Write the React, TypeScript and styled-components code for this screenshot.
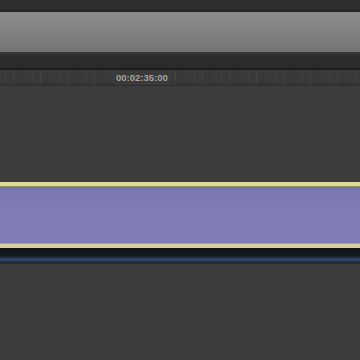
import React from "react";
import styled, { createGlobalStyle } from "styled-components";

const Global = createGlobalStyle`
  html, body { margin: 0; padding: 0; background: #3a3a3a; }
  #root { width: 360px; height: 360px; overflow: hidden; }
`;

const Screen = styled.div`
  position: relative;
  width: 360px;
  height: 360px;
  display: flex;
  flex-direction: column;
  background: #3b3b3b;
  overflow: hidden;
  font-family: "Liberation Sans", Arial, sans-serif;
`;

const TopBar = styled.div`
  height: 9px;
  background: linear-gradient(#2c2c2c, #303030);
  border-bottom: 3px solid #262626;
`;

const ScrollBand = styled.div`
  height: 40px;
  background: linear-gradient(#8c8c8c, #7f7f7f 60%, #737373);
  border-bottom: 2px solid #363636;
`;

const Toolbar = styled.div`
  height: 14px;
  background: linear-gradient(#2f2f2f, #2a2a2a);
  border-bottom: 2px solid #1c1c1c;
`;

const Ruler = styled.div`
  position: relative;
  height: 15px;
  background: repeating-linear-gradient(
      90deg,
      transparent 0 5px,
      rgba(255, 255, 255, 0.035) 5px 6px,
      transparent 6px 13px,
      rgba(255, 255, 255, 0.05) 13px 14px,
      transparent 14px 19px,
      rgba(0, 0, 0, 0.08) 19px 20px,
      transparent 20px 27px
    ),
    linear-gradient(#3b3b3b, #383838 70%, #343434);
  border-bottom: 1px solid #2c2c2c;
  display: flex;
  align-items: center;
`;

const Timecode = styled.span`
  margin-left: 115px;
  padding: 0 3px 0 1px;
  font-size: 9.5px;
  font-weight: bold;
  color: #a4a4a4;
  background: #3a3a3a;
  line-height: 15px;
`;

const Tracks = styled.div`
  position: relative;
  flex: 1;
  display: flex;
  flex-direction: column;
  background: #3c3c3c;
`;

const Playhead = styled.div`
  position: absolute;
  left: 110px;
  top: 0;
  bottom: 0;
  width: 1px;
  background: repeating-linear-gradient(
    #444444 0 2px,
    transparent 2px 4px
  );
`;

const Gap = styled.div<{ $h: number }>`
  height: ${(p) => p.$h}px;
  flex: none;
`;

const Clip = styled.div`
  position: relative;
  height: 58px;
  flex: none;
  background: linear-gradient(#7471a8 0, #7b78b0 6px, #807db5 40%, #7f7cb4 100%);
  border-top: 4px solid #dcd897;
  border-bottom: 4px solid #d4d1a0;
  box-shadow: inset 0 1px 0 #8f8c6c, inset 0 -1px 0 #a29db0;
`;

const Under = styled.div`
  position: relative;
  height: 16px;
  flex: none;
  background: linear-gradient(
    #111213 0,
    #151a20 8px,
    #2a4564 11px,
    #344f70 12px,
    #1d2a38 14px,
    #2b2c2e 16px
  );
`;

export default function App() {
  return (
    <>
      <Global />
      <Screen>
        <TopBar />
        <ScrollBand />
        <Toolbar />
        <Ruler>
          <Timecode>00:02:35:00</Timecode>
        </Ruler>
        <Tracks>
          <Playhead />
          <Gap $h={96} />
          <Clip />
          <Under />
        </Tracks>
      </Screen>
    </>
  );
}
